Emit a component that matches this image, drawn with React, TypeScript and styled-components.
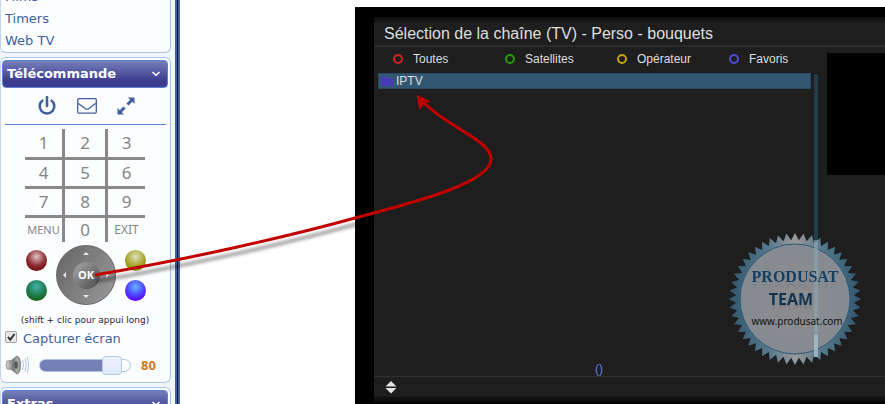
import React, { useState } from 'react';
import styled, { createGlobalStyle } from 'styled-components';

const Global = createGlobalStyle`
  *, *::before, *::after { box-sizing: border-box; }
  html, body, #root { height: 100%; }
  body { margin: 0; background: #fff; overflow: hidden; }
  button { font: inherit; color: inherit; background: none; border: 0; padding: 0; cursor: pointer; }
`;

const sans = `"DejaVu Sans", Verdana, sans-serif`;
const arial = `"Liberation Sans", Arial, sans-serif`;

const Page = styled.div`
  position: relative;
  display: flex;
  height: 100%;
  overflow: hidden;
`;

const Sidebar = styled.aside`
  flex: 0 0 180px;
  display: flex;
  flex-direction: column;
  gap: 4px;
  padding-right: 4px;
  background: #f1f6fc;
  border-right: 5px solid #41619d;
  position: relative;
  font: 13px/22px ${sans};
  color: #41619d;

  &::after {
    content: '';
    position: absolute;
    top: 0;
    bottom: 0;
    right: -3px;
    width: 1px;
    background: #0b1744;
  }
`;

const Card = styled.section`
  flex: none;
  background: #fbfdfe;
  border: 1px solid #a9c4e6;
  border-left-color: #c3d6ee;
  border-radius: 6px;
  padding: 2px 2px 2px 1px;
`;

const LinkCard = styled(Card)`
  height: 53px;
  display: flex;
  flex-direction: column;
  justify-content: flex-end;
  padding: 0 4px;
  border-top: 0;
  border-radius: 0 0 6px 6px;
  overflow: hidden;
`;

const NavLink = styled.a`
  flex: none;
  color: inherit;
  text-decoration: none;
`;

const Header = styled.button`
  && {
    display: flex;
    width: 100%;
    height: 28px;
    align-items: center;
    justify-content: space-between;
    padding: 0 6px 0 4px;
    border: 1px solid #5a83d6;
    border-radius: 4px;
    background: linear-gradient(#757fb8, #3d3d90 75%);
    color: #fff;
    font: bold 13px/20px ${sans};
  }
`;

const IconRow = styled.div`
  display: flex;
  justify-content: center;
  align-items: center;
  gap: 20px;
  height: 37px;
  margin: 0 2px 0 3px;
  padding-left: 1px;
  border-bottom: 1px solid #5a83d6;

  button { display: flex; }
`;

const Keypad = styled.div`
  display: grid;
  grid-template-columns: 40px 43px 37px;
  grid-template-rows: 31px 29px 29px 24px;
  width: 120px;
  margin: 4px auto 0;
  font: 17px/24px "Noto Sans", sans-serif;
  color: #858585;
`;

const Key = styled.button<{ $right: boolean; $bottom: boolean; $size: number }>`
  && {
    border: 0 solid #898989;
    border-right-width: ${p => (p.$right ? 3 : 0)}px;
    border-bottom-width: ${p => (p.$bottom ? 3 : 0)}px;
    font-size: ${p => p.$size}px;
    line-height: 20px;
    white-space: nowrap;
  }
`;

const Control = styled.div`
  display: grid;
  grid-template-columns: 21px 60px 21px;
  grid-template-rows: 30px 30px;
  column-gap: 9px;
  justify-content: center;
  align-items: center;
  margin-top: 3px;
  padding-left: 2px;
`;

const Ball = styled.button<{ $hi: string; $mid: string; $low: string }>`
  && {
    width: 21px;
    height: 21px;
    border-radius: 50%;
    background: radial-gradient(circle at 50% 32%, ${p => p.$hi}, ${p => p.$mid} 50%, ${p => p.$low} 80%);
  }
`;

const Pad = styled.div`
  grid-column: 2;
  grid-row: 1 / 3;
  display: grid;
  grid-template: 15px 28px 15px / 15px 28px 15px;
  place-items: center;
  place-content: center;
  width: 60px;
  height: 60px;
  border: 1px solid #666;
  border-radius: 50%;
  background: linear-gradient(120deg, #646464, #9b9b9b);

  button { display: flex; }
`;

const Ok = styled.button`
  && {
    display: block;
    width: 27px;
    height: 27px;
    border-radius: 50%;
    background: linear-gradient(135deg, #aaa, #484848);
    color: #fff;
    font: bold 11px/26px "Noto Sans", sans-serif;
  }
`;

const Hint = styled.p`
  margin: 7px 0 0;
  text-align: center;
  font-size: 9px;
  line-height: 16px;
  color: #1c2742;
`;

const Capture = styled.label`
  display: flex;
  align-items: center;
  gap: 6px;
  height: 22px;
  padding-left: 3px;
`;

const Check = styled.input`
  appearance: none;
  width: 12px;
  height: 12px;
  margin: 0 0 4px;
  border: 1px solid #a5a5a5;
  border-radius: 2px;
  background: #e9e9e9;

  &:checked {
    background: #e9e9e9 url("data:image/svg+xml,%3Csvg xmlns='http://www.w3.org/2000/svg' viewBox='0 0 10 10'%3E%3Cpath d='M2 5l2.3 2.6L8.500 2' fill='none' stroke='%23333' stroke-width='2'/%3E%3C/svg%3E");
  }
`;

const Volume = styled.div`
  display: flex;
  align-items: center;
  gap: 10px;
  height: 30px;
  padding-left: 3px;
`;

const Track = styled.div<{ $value: number }>`
  flex: none;
  width: 92px;
  height: 13px;
  display: flex;
  align-items: center;
  border: 1px solid #a9c4e6;
  border-radius: 7px;
  background: linear-gradient(90deg, #7581b6 ${p => p.$value}%, #fbfdfe ${p => p.$value}%);
`;

const Range = styled.input`
  appearance: none;
  flex: none;
  width: 98px;
  height: 20px;
  margin: 0;
  background: none;

  &::-webkit-slider-thumb {
    appearance: none;
    width: 20px;
    height: 19px;
    border: 1px solid #b3c9e8;
    border-radius: 4px;
    background: linear-gradient(#eef3fc, #dfe9f8);
  }
`;

const Level = styled.output`
  color: #d0761c;
  font: bold 13px/20px "Noto Sans", sans-serif;
`;

const Tv = styled.main`
  position: relative;
  flex: 1;
  min-width: 0;
  display: flex;
  flex-direction: column;
  margin: 7px 0 0 175px;
  padding: 10px 0 2px 19px;
  background: #000;
  color: #dedede;
  font-family: ${arial};
`;

const Title = styled.h1`
  flex: none;
  margin: 0;
  height: 30px;
  padding: 6px 0 0 10px;
  border-bottom: 2px solid #2b2b2b;
  background: linear-gradient(#101010, #161616 5px, #1e1e1e 6px);
  font-size: 16px;
  line-height: 22px;
  font-weight: normal;
`;

const Body = styled.div`
  flex: 1;
  display: flex;
  background: #1e1e1e;
`;

const Channels = styled.div`
  flex: 1;
  min-width: 0;
  display: flex;
  flex-direction: column;
  padding-left: 4px;
`;

const Tabs = styled.nav`
  display: flex;
  height: 26px;
  padding-left: 15px;
  font-size: 12px;
  line-height: 24px;
`;

const Tab = styled.button<{ $color: string }>`
  && {
    flex: 0 0 auto;
    min-width: 112px;
    display: flex;
    align-items: center;
    gap: 10px;
    height: 24px;
  }

  &&:last-child { min-width: 0; }

  &::before {
    content: '';
    width: 10px;
    height: 10px;
    border: 2px solid ${p => p.$color};
    border-radius: 50%;
  }
`;

const List = styled.ul`
  flex: 1;
  margin: 0;
  padding: 0;
  list-style: none;
`;

const Row = styled.button`
  && {
    display: flex;
    align-items: center;
    gap: 3px;
    width: 100%;
    height: 16px;
    padding-left: 2px;
    border: 1px solid #294a61;
    background: #315772;
    font-size: 12px;
    line-height: 14px;
  }
`;

const Status = styled.div`
  padding-left: 9px;
  text-align: center;
  font-size: 12px;
  line-height: 14px;
  color: #6180e0;
`;

const Scroll = styled.div`
  flex: 0 0 4px;
  margin: 27px 9px 19px 3px;
  background: linear-gradient(#213c4b calc(100% - 22px), #4d8099 calc(100% - 22px));
`;

const Preview = styled.div`
  flex: 0 0 58px;
  height: 122px;
  margin-top: 6px;
  background: #000;
`;

const Footer = styled.footer`
  flex: none;
  display: flex;
  height: 26px;
  padding: 4px 0 0 11px;
  border-top: 1px solid #303030;
  background: linear-gradient(#1e1e1e 19px, #131313 20px, #080808);
`;

const Seal = styled.div`
  position: absolute;
  right: 23px;
  bottom: 38px;
  width: 134px;
  height: 134px;
  display: flex;
  flex-direction: column;
  align-items: center;
  padding-top: 34px;
  text-align: center;

  svg { position: absolute; inset: 0; }
`;

const SealLine = styled.span<{ $serif?: boolean }>`
  position: relative;
  height: 22px;
  padding-right: ${p => (p.$serif ? 0 : 8)}px;
  color: ${p => (p.$serif ? '#123f63' : '#123450')};
  font: bold 16px/22px ${p => (p.$serif ? '"Liberation Serif", serif' : '"Noto Sans", sans-serif')};
  -webkit-box-reflect: below -10px linear-gradient(transparent 55%, rgba(0, 0, 0, 0.35));
`;

const SealSite = styled.span`
  position: relative;
  padding-left: 4px;
  color: #111;
  font: 10px/22px "Noto Sans", sans-serif;
`;

const Annotation = styled.svg`
  position: absolute;
  top: 0;
  left: 0;
  pointer-events: none;
`;

const Chevron = () => (
  <svg width="10" height="8" viewBox="0 0 10 8" aria-hidden="true">
    <path d="M1.5 2L5 5.2L8.5 2" fill="none" stroke="#fff" strokeWidth="1.5" />
  </svg>
);

const keys: [string, number][] = [
  ['1', 17], ['2', 17], ['3', 17],
  ['4', 17], ['5', 17], ['6', 17],
  ['7', 17], ['8', 17], ['9', 17],
  ['MENU', 11], ['0', 17], ['EXIT', 12],
];

const tabs = [
  ['Toutes', '#cf2222'],
  ['Satellites', '#2c9a0a'],
  ['Opérateur', '#c4a400'],
  ['Favoris', '#4c4cdc'],
];

const teeth = Array.from({ length: 96 }, (_, i) => {
  const r = i % 2 ? 59 : 66;
  const a = (i * Math.PI) / 48 - Math.PI / 2;
  return `${(67 + r * Math.cos(a)).toFixed(2)},${(67 + r * Math.sin(a)).toFixed(2)}`;
}).join(' ');

const SealBadge = () => (
  <Seal>
    <svg width="134" height="134" viewBox="0 0 134 134" aria-hidden="true">
      <defs>
        <linearGradient id="rim" x1="0" x2="1" y1="0" y2="0">
          <stop offset="0" stopColor="#31566e" />
          <stop offset=".3" stopColor="#55788c" />
          <stop offset=".5" stopColor="#999" />
          <stop offset=".7" stopColor="#55788c" />
          <stop offset="1" stopColor="#31566e" />
        </linearGradient>
        <radialGradient id="face">
          <stop offset="0" stopColor="#8d8b8c" />
          <stop offset="1" stopColor="#858b92" />
        </radialGradient>
      </defs>
      <polygon points={teeth} fill="url(#rim)" />
      <circle cx="67" cy="67" r="55" fill="url(#face)" stroke="#2d5877" strokeWidth="1" />
      <rect x="86" y="8" width="4" height="95" fill="#8aa9b6" opacity=".6" />
      <rect x="86" y="103" width="4" height="22" fill="#a3c0cb" opacity=".8" />
    </svg>
    <SealLine $serif>PRODUSAT</SealLine>
    <SealLine>TEAM</SealLine>
    <SealSite>www.produsat.com</SealSite>
  </Seal>
);

const ARROW = 'M95 275 C190 259 290 236 355 218 C420 201 491 182 491 159 C491 140 448 128 422 101';

export default function App() {
  const [volume, setVolume] = useState(80);
  const [capture, setCapture] = useState(true);

  return (
    <Page>
      <Global />
      <Sidebar>
        <LinkCard as="nav">
          <NavLink href="#films">Films</NavLink>
          <NavLink href="#timers">Timers</NavLink>
          <NavLink href="#webtv">Web TV</NavLink>
        </LinkCard>

        <Card>
          <Header>Télécommande<Chevron /></Header>
          <IconRow>
            <button aria-label="Marche / arrêt">
              <svg width="20" height="20" viewBox="0 0 20 20" fill="none" stroke="#41619d" strokeWidth="2.6">
                <path d="M6.2 4A7.3 7.3 0 1 0 13.8 4" />
                <path d="M10 1V10" strokeLinecap="round" />
              </svg>
            </button>
            <button aria-label="Message">
              <svg width="20" height="16" viewBox="0 0 20 16" fill="none" stroke="#41619d" strokeWidth="1.3">
                <rect x="0.7" y="0.7" width="18.6" height="14.4" rx="1" />
                <path d="M1 5.2L8.8 11Q10 11.7 11.2 11L19 5.2" />
              </svg>
            </button>
            <button aria-label="Plein écran">
              <svg width="18" height="18" viewBox="0 0 18 18" fill="#41619d">
                <path d="M11 0.5H17.5V7L15.300 4.800L11.500 8.600L9.400 6.500L13.200 2.700Z" />
                <path d="M7 17.5H0.5V11L2.700 13.200L6.500 9.400L8.600 11.500L4.800 15.300Z" />
              </svg>
            </button>
          </IconRow>

          <Keypad>
            {keys.map(([k, size], i) => (
              <Key key={k} $right={i % 3 < 2} $bottom={i < 9} $size={size}>{k}</Key>
            ))}
          </Keypad>

          <Control>
            <Ball aria-label="Rouge" $hi="#e0c4c4" $mid="#8d3034" $low="#6f0b10" />
            <Pad>
              <span />
              <button aria-label="Haut"><svg width="8" height="5"><path d="M1 4L4 1L7 4Z" fill="#e8e8e8" /></svg></button>
              <span />
              <button aria-label="Gauche"><svg width="5" height="8"><path d="M4 1L1 4L4 7Z" fill="#e8e8e8" /></svg></button>
              <Ok>OK</Ok>
              <button aria-label="Droite"><svg width="5" height="8"><path d="M1 1L4 4L1 7Z" fill="#e8e8e8" /></svg></button>
              <span />
              <button aria-label="Bas"><svg width="8" height="5"><path d="M1 1L4 4L7 1Z" fill="#e8e8e8" /></svg></button>
            </Pad>
            <Ball aria-label="Jaune" $hi="#e0e0c0" $mid="#a8a830" $low="#8d8d00" />
            <Ball aria-label="Vert" $hi="#45b0a8" $mid="#1d7d50" $low="#176010" />
            <Ball aria-label="Bleu" $hi="#62b4ff" $mid="#5040ff" $low="#5a00ff" />
          </Control>

          <Hint>(shift + clic pour appui long)</Hint>
          <Capture>
            <Check type="checkbox" checked={capture} onChange={e => setCapture(e.target.checked)} />
            Capturer écran
          </Capture>
          <Volume>
            <svg width="24" height="20" viewBox="0 0 24 20" aria-hidden="true">
              <defs>
                <linearGradient id="horn"><stop offset="0" stopColor="#ddd" /><stop offset=".5" stopColor="#777" /><stop offset="1" stopColor="#aaa" /></linearGradient>
              </defs>
              <path d="M2 6Q0 10 2 14L6 14.500L12 19Q15.500 18 15.500 10T12 1L6 5.500Z" fill="url(#horn)" stroke="#888" strokeWidth=".8" />
              <ellipse cx="12" cy="10" rx="3.200" ry="8.500" fill="#a8a8a2" stroke="#777" strokeWidth=".8" />
              <ellipse cx="11" cy="10" rx="1.800" ry="3.800" fill="#555" />
              <path d="M17.500 5Q19.500 10 17.500 15M20 3.500Q22.500 10 20 16.500M22.300 2Q25 10 22.300 18" fill="none" stroke="#a9bcdc" strokeWidth=".9" />
            </svg>
            <Track $value={volume}>
              <Range type="range" aria-label="Volume" min="0" max="100" value={volume} onChange={e => setVolume(Number(e.target.value))} />
            </Track>
            <Level>{volume}</Level>
          </Volume>
        </Card>

        <Card>
          <Header>Extras<Chevron /></Header>
        </Card>
      </Sidebar>

      <Tv>
        <Title>Sélection de la chaîne (TV) - Perso - bouquets</Title>
        <Body>
          <Channels>
            <Tabs>
              {tabs.map(([name, color]) => <Tab key={name} $color={color}>{name}</Tab>)}
            </Tabs>
            <List>
              <li>
                <Row>
                  <svg width="12" height="10" viewBox="0 0 12 10" aria-hidden="true"><path d="M0 1.500L1 0.500H5L6 2H11L12 3V10H0Z" fill="#463cb8" /></svg>
                  IPTV
                </Row>
              </li>
            </List>
            <Status>()</Status>
          </Channels>
          <Scroll />
          <Preview />
        </Body>
        <Footer>
          <svg width="12" height="13" viewBox="0 0 12 13" aria-hidden="true"><path d="M6 0L11.500 5.500H0.500ZM6 12.500L0.500 7H11.500Z" fill="#e4e4e4" /></svg>
        </Footer>
        <SealBadge />
      </Tv>

      <Annotation width="885" height="404" viewBox="0 0 885 404" aria-hidden="true">
        <defs>
          <filter id="soft" filterUnits="userSpaceOnUse" x="80" y="80" width="440" height="220"><feGaussianBlur stdDeviation="1.5" /></filter>
        </defs>
        <path d="M97 281 C192 265 292 242 357 224" fill="none" stroke="#000" strokeOpacity=".32" strokeWidth="4" filter="url(#soft)" />
        <path d={ARROW} fill="none" stroke="#c00000" strokeWidth="3" />
        <path d="M416.500 95L431 101.500L424 103.500L419.500 110.500Z" fill="#c00000" />
      </Annotation>
    </Page>
  );
}
